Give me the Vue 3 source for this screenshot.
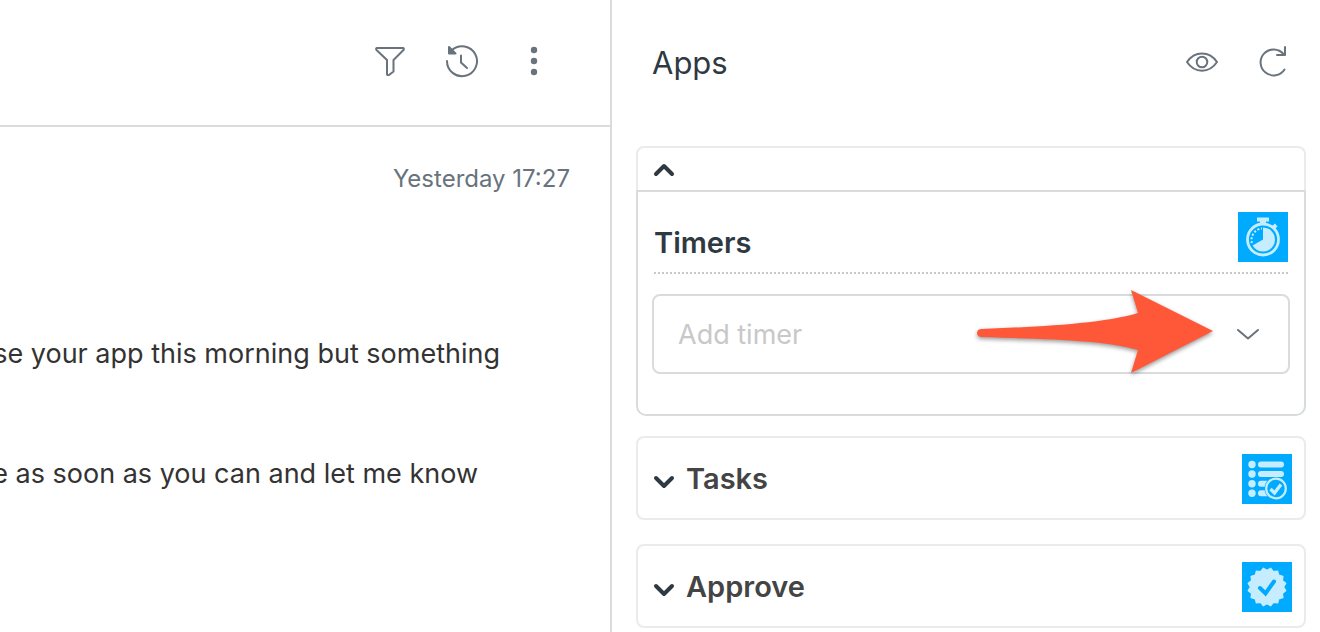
<script setup>
import { ref } from 'vue'

const timer = ref('')
const timersOpen = ref(true)
const collapsed = [
  { id: 'tasks', title: 'Tasks' },
  { id: 'approve', title: 'Approve' },
]

const badge = Array.from({ length: 32 }, (_, i) => {
  const r = i % 2 ? 19 : 16.5
  const a = (Math.PI * i) / 16
  return `${(25 + r * Math.sin(a)).toFixed(2)},${(25 - r * Math.cos(a)).toFixed(2)}`
}).join(' ')
</script>

<template>
  <div class="workspace">
    <main class="conversation">
      <header class="toolbar">
        <button type="button" class="icon-button" aria-label="Filter">
          <svg width="36" height="36" viewBox="0 0 36 36" fill="none" stroke="#68737d" stroke-width="2" stroke-linejoin="round">
            <path d="M5 5H31Q32.500 5.600 31.500 7L21.500 17V28.500L17 32Q15 32.500 15 31V17L4.500 7Q3.500 5.600 5 5Z" />
          </svg>
        </button>
        <button type="button" class="icon-button" aria-label="History">
          <svg width="36" height="36" viewBox="0 0 36 36" fill="none" stroke="#68737d" stroke-width="2" stroke-linecap="round" stroke-linejoin="round">
            <path d="M3 18A15 15 0 1 0 8 7" />
            <path d="M17 12.500V19.500L23 25" />
            <path d="M5 4V10.500H11.500Z" fill="#68737d" />
          </svg>
        </button>
        <button type="button" class="icon-button" aria-label="More options">
          <svg width="36" height="36" viewBox="0 0 36 36" fill="#68737d">
            <circle cx="18" cy="7" r="3.200" />
            <circle cx="18" cy="18" r="3.200" />
            <circle cx="18" cy="29" r="3.200" />
          </svg>
        </button>
      </header>
      <time class="stamp">Yesterday 17:27</time>
      <div class="message">
        <p class="line line-first">se your app this morning but something</p>
        <p class="line line-second">e as soon as you can and let me know</p>
      </div>
    </main>

    <aside class="apps">
      <header class="apps-header">
        <h1>Apps</h1>
        <div class="apps-actions">
          <button type="button" class="icon-button" aria-label="Show apps">
            <svg width="36" height="36" viewBox="0 0 36 36" fill="none" stroke="#68737d" stroke-width="2">
              <path d="M3 17C10.500 5.500 25.500 5.500 33 17C25.500 28.500 10.500 28.500 3 17Z" stroke-linejoin="round" />
              <circle cx="18" cy="17" r="5.300" />
            </svg>
          </button>
          <button type="button" class="icon-button" aria-label="Reload apps">
            <svg width="36" height="36" viewBox="0 0 36 36" fill="none" stroke="#68737d" stroke-width="2" stroke-linecap="round" stroke-linejoin="round">
              <path d="M28.500 24.500A13 13 0 1 1 27.500 9" />
              <path d="M29 2V10H21" />
            </svg>
          </button>
        </div>
      </header>

      <section class="timers">
        <button type="button" class="timers-toggle" aria-label="Toggle timers" :aria-expanded="timersOpen" @click="timersOpen = !timersOpen">
          <svg width="24" height="24" viewBox="0 0 24 24" fill="none" stroke="#2f3941" stroke-width="4" stroke-linecap="round" stroke-linejoin="round">
            <path d="M4 16L12 8L20 16" />
          </svg>
        </button>
        <div v-if="timersOpen" class="timers-body">
          <div class="timers-heading">
            <h2>Timers</h2>
            <svg width="50" height="50" viewBox="0 0 50 50" aria-hidden="true">
              <rect width="50" height="50" fill="#00aaff" />
              <path d="M19 5.500H31V9.500H28V13H22V9.500H19ZM34 14L37 11.500L39.500 14.500L37 17Z" fill="#c5edff" />
              <circle cx="25" cy="27.500" r="15.500" fill="none" stroke="#c5edff" stroke-width="2.800" />
              <path d="M25 27.500V15.500A12 12 0 1 1 14.600 33.500Z" fill="#c5edff" />
              <path d="M13.900 31A11.500 11.500 0 0 1 24 16.500" fill="none" stroke="#c5edff" stroke-width="2" stroke-dasharray="2 1.800" />
            </svg>
          </div>
          <div class="select-wrap">
            <select v-model="timer" class="timer-select" aria-label="Add timer">
              <option value="" disabled>Add timer</option>
            </select>
            <svg class="caret" width="24" height="24" viewBox="0 0 24 24" fill="none" stroke="#68737d" stroke-width="2" stroke-linecap="round" stroke-linejoin="round">
              <path d="M2 8L12 16.500L22 8" />
            </svg>
            <svg class="pointer" width="240" height="92" viewBox="0 0 240 92" aria-hidden="true">
              <path d="M7 41C60 39 128 36 164 25L157 2L239 43L157 85L164 62C128 51 60 51 7 49Q3 48 3 45Q3 41.500 7 41Z" fill="#ff5838" />
            </svg>
          </div>
        </div>
      </section>

      <section v-for="app in collapsed" :key="app.id" class="collapsed">
        <button type="button" class="collapsed-toggle" aria-expanded="false">
          <svg width="24" height="24" viewBox="0 0 24 24" fill="none" stroke="#2f3941" stroke-width="4" stroke-linecap="round" stroke-linejoin="round">
            <path d="M4 11L12 19L20 11" />
          </svg>
          <span class="collapsed-title">{{ app.title }}</span>
          <svg v-if="app.id === 'tasks'" width="50" height="50" viewBox="0 0 50 50" aria-hidden="true">
            <rect width="50" height="50" fill="#00aaff" />
            <g fill="#c5edff">
              <circle cx="10" cy="10.500" r="3.700" />
              <circle cx="10" cy="20" r="3.700" />
              <circle cx="10" cy="29.700" r="3.700" />
              <circle cx="10" cy="39.300" r="3.700" />
              <rect x="16" y="7.500" width="26" height="6" rx="3" />
              <rect x="16" y="17" width="26" height="6" rx="3" />
              <rect x="16" y="26.700" width="14" height="6" rx="3" />
              <rect x="16" y="36.300" width="14" height="6" rx="3" />
            </g>
            <circle cx="34" cy="34.500" r="11.500" fill="#00aaff" />
            <circle cx="34" cy="34.500" r="9.800" fill="#00aaff" stroke="#c5edff" stroke-width="2.200" />
            <path d="M28.500 35L32.500 39L39 30.500" fill="none" stroke="#c5edff" stroke-width="3.400" />
          </svg>
          <svg v-else width="50" height="50" viewBox="0 0 50 50" aria-hidden="true">
            <rect width="50" height="50" fill="#00aaff" />
            <polygon :points="badge" fill="#c5edff" stroke="#c5edff" stroke-width="1.500" stroke-linejoin="round" />
            <path d="M18 26L23.500 31.500L32 19.500" fill="none" stroke="#00aaff" stroke-width="4" stroke-linecap="round" />
          </svg>
        </button>
      </section>
    </aside>
  </div>
</template>

<style>
body {
  margin: 0;
  background: #fff;
}
</style>

<style scoped>
.workspace {
  display: grid;
  grid-template-columns: minmax(0, 612fr) minmax(0, 708fr);
  min-height: 100vh;
  font-family: Inter, "Liberation Sans", sans-serif;
  color: #2f3941;
}

.workspace * {
  box-sizing: border-box;
}

button {
  margin: 0;
  padding: 0;
  border: 0;
  background: none;
  color: inherit;
  font-family: inherit;
  cursor: pointer;
}

svg {
  display: block;
  flex: none;
}

h1,
h2,
p {
  margin: 0;
}

.conversation {
  display: flex;
  flex-direction: column;
  overflow: hidden;
  border-right: 2px solid #d8dcde;
}

.toolbar {
  display: flex;
  justify-content: flex-end;
  gap: 36px;
  padding: 43px 58px 46px 0;
  border-bottom: 2px solid #d8dcde;
}

.stamp {
  margin-top: 36px;
  padding-right: 40px;
  color: #68737d;
  font-size: 24px;
  line-height: 32px;
  text-align: right;
}

.message {
  display: flex;
  flex-direction: column;
  gap: 80px;
  margin-top: 139px;
}

.line {
  display: flex;
  justify-content: flex-end;
  color: #333;
  font-size: 27px;
  line-height: 40px;
  white-space: nowrap;
}

.line-first {
  padding-right: 110px;
}

.line-second {
  padding-right: 132px;
}

.apps {
  padding: 0 14px 4px 24px;
}

.apps-header {
  display: flex;
  align-items: center;
  justify-content: space-between;
  margin-bottom: 63px;
  padding: 43px 14px 0 16px;
}

h1 {
  font-size: 31px;
  font-weight: 400;
  line-height: 40px;
}

.apps-actions {
  display: flex;
  gap: 36px;
}

.timers-toggle {
  display: flex;
  align-items: center;
  width: 100%;
  height: 44px;
  padding: 2px 14px 0;
  border: 2px solid #e9ebed;
  border-bottom: 0;
  border-radius: 8px 8px 0 0;
}

.timers-body {
  padding: 20px 16px 40px;
  border: 2px solid #d8dcde;
  border-radius: 0 0 10px 10px;
}

.timers-heading {
  display: flex;
  align-items: flex-end;
  justify-content: space-between;
  padding-bottom: 10px;
  border-bottom: 2px dotted #c8c8c8;
}

h2 {
  font-size: 29px;
  font-weight: 600;
  line-height: 38px;
}

.select-wrap {
  position: relative;
  margin: 20px -2px 0;
}

.timer-select {
  display: block;
  width: 100%;
  height: 80px;
  padding: 0 80px 0 24px;
  border: 2px solid #d8dcde;
  border-radius: 8px;
  appearance: none;
  background: #fff;
  color: #c8c8c8;
  font-family: inherit;
  font-size: 27px;
}

.caret {
  position: absolute;
  top: 28px;
  right: 30px;
  pointer-events: none;
}

.pointer {
  position: absolute;
  top: -6px;
  right: 76px;
  overflow: visible;
  filter: drop-shadow(0 2px 2px rgba(0, 0, 0, 0.4));
  pointer-events: none;
}

.collapsed {
  margin-top: 24px;
  border: 2px solid #e9ebed;
  border-radius: 8px;
}

.timers + .collapsed {
  margin-top: 20px;
}

.collapsed-toggle {
  display: flex;
  align-items: center;
  width: 100%;
  height: 80px;
  padding: 2px 12px 0 14px;
  text-align: left;
}

.collapsed-title {
  flex: 1;
  padding-left: 10px;
  color: #444;
  font-size: 29px;
  font-weight: 600;
  line-height: 40px;
}
</style>
